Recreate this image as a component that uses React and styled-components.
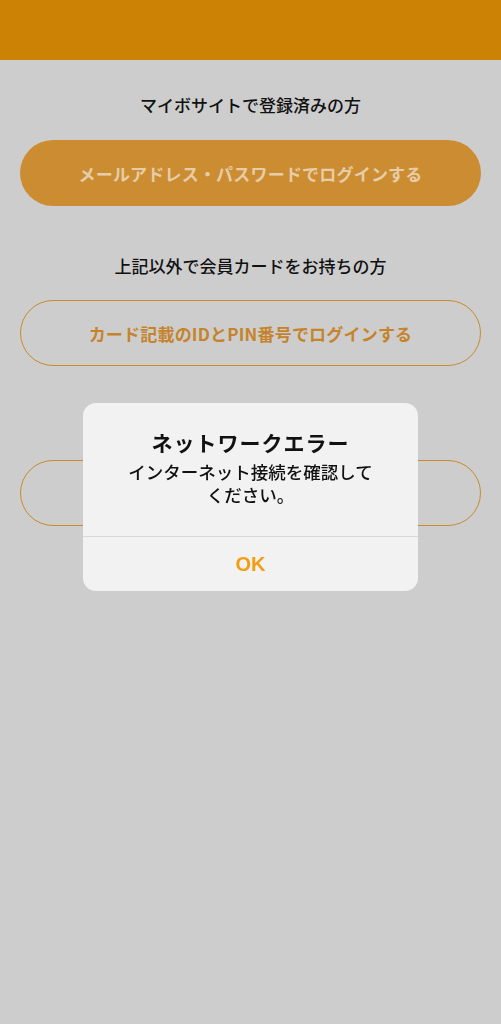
import React from 'react';
import styled, { createGlobalStyle } from 'styled-components';

const GlobalStyle = createGlobalStyle`
  html, body {
    margin: 0;
    padding: 0;
    background: #cdcdcd;
  }
  body {
    font-family: "Noto Sans CJK JP", "Liberation Sans", sans-serif;
  }
`;

const Page = styled.div`
  min-height: 1024px;
  background: #cdcdcd;
`;

const Header = styled.header`
  height: 60px;
  background: #cb8205;
`;

const Content = styled.main`
  display: flex;
  flex-direction: column;
  padding: 0 20px;
`;

const Label = styled.p`
  margin: 0;
  padding-top: ${p => p.$top}px;
  height: 24px;
  line-height: 24px;
  text-align: center;
  font-size: 17px;
  font-weight: 500;
  color: #111;
`;

const Button = styled.button`
  margin-top: ${p => p.$top}px;
  height: 66px;
  border-radius: 33px;
  font-family: inherit;
  font-size: 17px;
  font-weight: 700;
  letter-spacing: 0.2px;
  border: ${p => (p.$filled ? 'none' : '1.5px solid #c98a2c')};
  background: ${p => (p.$filled ? '#cc8c32' : 'transparent')};
  color: ${p => (p.$filled ? '#e6cda8' : '#c5842b')};
`;

const Overlay = styled.div`
  position: fixed;
  inset: 0;
  display: flex;
  justify-content: center;
  align-items: flex-start;
  padding-top: 403px;
`;

const Alert = styled.div`
  width: 335px;
  background: #f2f2f2;
  border-radius: 13px;
  overflow: hidden;
  display: flex;
  flex-direction: column;
`;

const AlertBody = styled.div`
  padding: 25px 20px 0;
  height: 108px;
  text-align: center;
  color: #111;
`;

const AlertTitle = styled.h2`
  margin: 0;
  font-size: 21px;
  font-weight: 700;
  line-height: 28px;
  letter-spacing: 1px;
`;

const AlertMessage = styled.p`
  margin: 4px 0 0;
  font-size: 17.5px;
  font-weight: 500;
  line-height: 23px;
`;

const Divider = styled.div`
  height: 1px;
  background: #d9d9d9;
`;

const AlertAction = styled.button`
  height: 54px;
  border: none;
  background: transparent;
  color: #f29d12;
  font-family: "Liberation Sans", "Noto Sans CJK JP", sans-serif;
  font-size: 20px;
  font-weight: 700;
`;

export default function App() {
  return (
    <Page>
      <GlobalStyle />
      <Header />
      <Content>
        <Label $top={33}>マイボサイトで登録済みの方</Label>
        <Button $filled $top={23}>メールアドレス・パスワードでログインする</Button>
        <Label $top={48}>上記以外で会員カードをお持ちの方</Label>
        <Button $top={22}>カード記載のIDとPIN番号でログインする</Button>
        <Button $top={94} aria-label="新規会員登録" />
      </Content>
      <Overlay>
        <Alert>
          <AlertBody>
            <AlertTitle>ネットワークエラー</AlertTitle>
            <AlertMessage>
              インターネット接続を確認して
              <br />
              ください。
            </AlertMessage>
          </AlertBody>
          <Divider />
          <AlertAction>OK</AlertAction>
        </Alert>
      </Overlay>
    </Page>
  );
}
